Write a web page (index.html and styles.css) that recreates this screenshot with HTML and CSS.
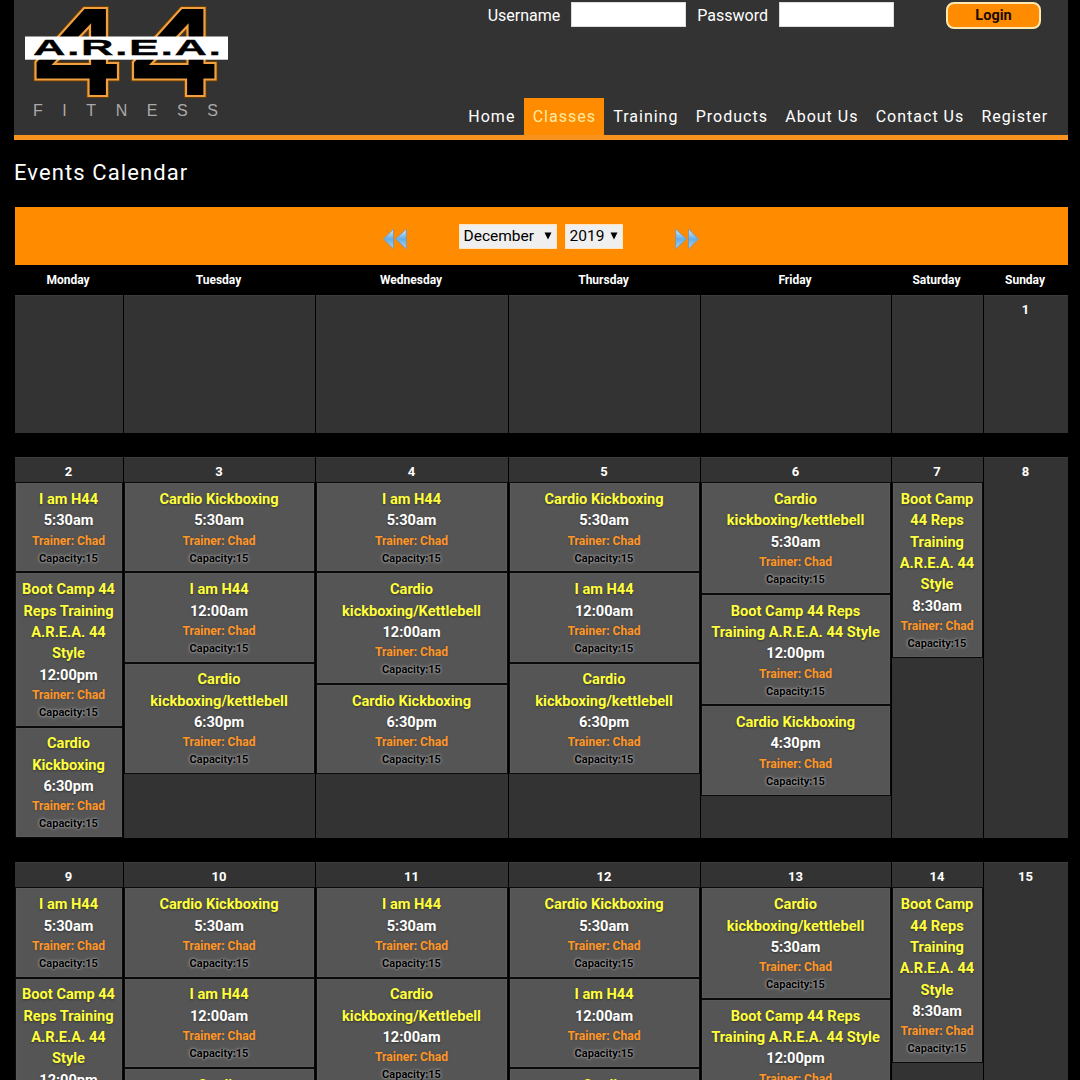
FILE: index.html
```html
<!DOCTYPE html>
<html lang="en">
<head>
    <meta charset="UTF-8">
    <meta name="viewport" content="width=device-width, initial-scale=1.0">
    <title>A.R.E.A. 44 Fitness</title>
    <link rel="stylesheet" href="styles.css">
</head>

<body>
    <div class="page">
        <header class="header">
            <svg class="logo" width="220" height="130" viewBox="14 0 220 130">
                <defs>
                    <path id="four" d="M84 8H107V63H118V79.500H107V96H88.500V79.500H35.500V62ZM90 26L54 64H90Z" fill-rule="evenodd" />
                </defs>
                <g fill="#000" stroke="#6b3c00" stroke-width="4">
                    <use href="#four" />
                    <use href="#four" x="97.500" />
                </g>
                <g fill="#000" stroke="#f0a040" stroke-width="2.200">
                    <use href="#four" />
                    <use href="#four" x="97.500" />
                </g>
                <rect x="25" y="36.500" width="203" height="23.200" fill="#fff" />
                <text class="logo-name" transform="translate(33 55.300) scale(2 1)" textLength="94" lengthAdjust="spacing">A.R.E.A.</text>
                <text class="logo-sub" x="33" y="115.500" textLength="185">FITNESS</text>
            </svg>
            <div class="header-right">
                <form class="login">
                    <label for="username">Username</label>
                    <input type="text" id="username">
                    <label for="password">Password</label>
                    <input type="password" id="password">
                    <button type="button">Login</button>
                </form>
                <nav class="menu">
                    <a href="#">Home</a>
                    <a href="#" class="active">Classes</a>
                    <a href="#">Training</a>
                    <a href="#">Products</a>
                    <a href="#">About Us</a>
                    <a href="#">Contact Us</a>
                    <a href="#">Register</a>
                </nav>
            </div>
        </header>
        <main>
            <h1>Events Calendar</h1>
            <div class="toolbar">
                <svg class="arrows" width="24" height="22" viewBox="0 0 24 22">
                    <defs>
                        <linearGradient id="blue" x1="0" y1="0" x2="0" y2="1">
                            <stop offset="0" stop-color="#d8eaf8" />
                            <stop offset="0.500" stop-color="#62aee8" />
                            <stop offset="1" stop-color="#a8d4fa" />
                        </linearGradient>
                    </defs>
                    <path d="M10.500 1V21L0.500 11ZM23.300 1V21L12.500 11Z" fill="url(#blue)" stroke="#8d959b" stroke-width="1" />
                </svg>
                <div class="selects">
                    <div class="select month">
                        <select><option>December</option></select>
                        <svg width="8" height="8" viewBox="0 0 8 8"><path d="M0.500 0.500H7.500L4 7.500Z" /></svg>
                    </div>
                    <div class="select year">
                        <select><option>2019</option></select>
                        <svg width="8" height="8" viewBox="0 0 8 8"><path d="M0.500 0.500H7.500L4 7.500Z" /></svg>
                    </div>
                </div>
                <svg class="arrows" width="24" height="22" viewBox="0 0 24 22">
                    <path d="M0.700 1V21L11.500 11ZM13.500 1V21L23.500 11Z" fill="url(#blue)" stroke="#8d959b" stroke-width="1" />
                </svg>
            </div>
            <div class="week days">
                <div>Monday</div>
                <div>Tuesday</div>
                <div>Wednesday</div>
                <div>Thursday</div>
                <div>Friday</div>
                <div>Saturday</div>
                <div>Sunday</div>
            </div>
            <div id="calendar"></div>
        </main>
    </div>
    <script src="script.js"></script>
</body>

</html>
```

FILE: styles.css
```css
* {
    box-sizing: border-box;
}

body {
    margin: 0;
    background-color: #000;
    color: #fff;
    font-family: Roboto, "Liberation Sans", sans-serif;
    height: 1080px;
    overflow: hidden;
}

.page {
    width: 1054px;
    margin-left: 14px;
}

/* Header */
.header {
    display: flex;
    justify-content: space-between;
    height: 140px;
    background-color: #333;
    border-bottom: 5px solid #f7931e;
}

.logo {
    display: block;
}

.logo-name {
    font-family: "Liberation Sans", Arial, sans-serif;
    font-weight: bold;
    font-size: 22.500px;
    fill: #000;
    stroke: #000;
    stroke-width: 0.300px;
}

.logo-sub {
    font-family: "Liberation Sans", Arial, sans-serif;
    font-size: 16px;
    fill: #aaa;
}

.header-right {
    display: flex;
    flex-direction: column;
    justify-content: space-between;
    align-items: flex-end;
}

.login {
    display: flex;
    align-items: center;
    height: 30px;
    margin-right: 27px;
    font-size: 16px;
}

.login input {
    width: 115.500px;
    height: 25px;
    margin: 0 11px 1px 10.500px;
    padding: 0 4px;
    border: 1px solid #ddd;
    background-color: #fff;
}

.login button {
    width: 95px;
    height: 27px;
    margin-left: 41px;
    padding: 0;
    border: 2px solid #ffe9b0;
    border-radius: 8px;
    background-color: #ff8c00;
    color: #1a0a00;
    font-family: inherit;
    font-size: 14.500px;
    font-weight: bold;
}

.menu {
    display: flex;
    margin-right: 11.700px;
}

.menu a {
    height: 37px;
    padding: 0 8.200px 0 9.100px;
    line-height: 37px;
    color: #fff;
    font-size: 16px;
    letter-spacing: 1px;
    text-decoration: none;
}

.menu .active {
    background-color: #ff8c00;
    color: #ffeaa0;
}

h1 {
    margin: 0;
    height: 67px;
    line-height: 65px;
    font-size: 22px;
    font-weight: normal;
    letter-spacing: 1.100px;
}

/* Month and year bar */
.toolbar {
    display: flex;
    justify-content: center;
    align-items: center;
    gap: 52px;
    height: 58px;
    margin-left: 1px;
    padding-right: 2px;
    background-color: #ff8c00;
}

.arrows {
    margin-top: 5px;
}

.selects {
    display: flex;
    gap: 8px;
}

.select {
    position: relative;
}

.select select {
    appearance: none;
    width: 100%;
    height: 25px;
    padding: 0 4px;
    border: 1px solid #ffe4bd;
    border-radius: 0;
    background-color: #efefef;
    color: #000;
    font-family: inherit;
    font-size: 15.500px;
}

.select svg {
    position: absolute;
    right: 5px;
    top: 8px;
}

.month {
    width: 98px;
}

.year {
    width: 58px;
}

/* Calendar */
.week {
    display: grid;
    grid-template-columns: 108px 191px 192px 191px 190px 91px 84px;
    column-gap: 1px;
    margin-left: 1px;
}

.days {
    height: 30px;
    line-height: 31px;
    font-size: 12px;
    font-weight: bold;
    text-align: center;
}

.days div {
    padding-right: 2px;
}

.week + .week {
    margin-top: 24px;
}

.day {
    min-height: 138px;
    background-color: #333;
    border-top: 1px solid #3c3c3c;
    text-align: center;
}

.number {
    height: 24.300px;
    padding-right: 1px;
    line-height: 28.500px;
    font-size: 13px;
    font-weight: bold;
}

.event {
    padding: 5.700px 6px 4.800px 5px;
    border: 1px solid #0a0a0a;
    background-color: #555;
    box-shadow: inset 0 0 0 1px #5a5a5a;
    font-size: 14.600px;
    font-weight: bold;
    line-height: 21.350px;
    text-shadow: 0 1px 2px #333;
}

.title {
    color: #ffff3c;
}

.trainer {
    color: #ff9626;
    font-size: 12.100px;
    line-height: 18px;
    text-shadow: 0 0 2px #444;
}

.capacity {
    color: #000;
    font-size: 11px;
    line-height: 17px;
    text-shadow: 0 0 3px #ddd;
}
```

FILE: script.js
```js
const campName = "Boot Camp 44 Reps Training A.R.E.A. 44 Style";

// Same classes every week, Monday to Sunday
const classes = [
    [["I am H44", "5:30am"], [campName, "12:00pm"], ["Cardio Kickboxing", "6:30pm"]],
    [["Cardio Kickboxing", "5:30am"], ["I am H44", "12:00am"], ["Cardio kickboxing/kettlebell", "6:30pm"]],
    [["I am H44", "5:30am"], ["Cardio kickboxing/Kettlebell", "12:00am"], ["Cardio Kickboxing", "6:30pm"]],
    [["Cardio Kickboxing", "5:30am"], ["I am H44", "12:00am"], ["Cardio kickboxing/kettlebell", "6:30pm"]],
    [["Cardio kickboxing/kettlebell", "5:30am"], [campName, "12:00pm"], ["Cardio Kickboxing", "4:30pm"]],
    [[campName, "8:30am"]],
    []
];

function eventHtml(event) {
    return `<div class="event">
        <div class="title">${event[0]}</div>
        <div class="time">${event[1]}</div>
        <div class="trainer">Trainer: Chad</div>
        <div class="capacity">Capacity:15</div>
    </div>`;
}

// December 1st is a Sunday, so the first row starts at -5
let html = "";
for (let monday = -5; monday <= 9; monday += 7) {
    html += '<div class="week">';
    classes.forEach(function (events, i) {
        const date = monday + i;
        html += '<div class="day">';
        if (date > 0) {
            html += `<div class="number">${date}</div>`;
        }
        if (date > 1) {
            html += events.map(eventHtml).join("");
        }
        html += "</div>";
    });
    html += "</div>";
}
document.getElementById("calendar").innerHTML = html;
```
